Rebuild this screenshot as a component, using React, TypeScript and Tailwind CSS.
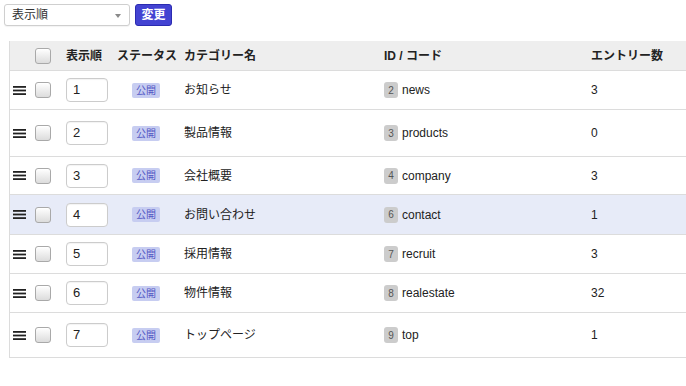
const rows = [
  { order: 1, name: 'お知らせ', id: 2, code: 'news', count: 3, h: 'h-[39px]', active: false },
  { order: 2, name: '製品情報', id: 3, code: 'products', count: 0, h: 'h-[47px]', active: false },
  { order: 3, name: '会社概要', id: 4, code: 'company', count: 3, h: 'h-[38px]', active: false },
  { order: 4, name: 'お問い合わせ', id: 6, code: 'contact', count: 1, h: 'h-[40px]', active: true },
  { order: 5, name: '採用情報', id: 7, code: 'recruit', count: 3, h: 'h-[39px]', active: false },
  { order: 6, name: '物件情報', id: 8, code: 'realestate', count: 32, h: 'h-[39px]', active: false },
  { order: 7, name: 'トップページ', id: 9, code: 'top', count: 1, h: 'h-[45px]', active: false },
]

function Checkbox() {
  return (
    <span className="block h-4 w-4 rounded-[3px] border border-[#a9a9a9] bg-gradient-to-b from-white to-[#dcdcdc] shadow-[inset_0_1px_0_#fff]" />
  )
}

function Handle() {
  return (
    <svg width="13" height="9" viewBox="0 0 13 9" className="block">
      <rect x="0" y="0" width="13" height="1.8" fill="#222" />
      <rect x="0" y="3.6" width="13" height="1.8" fill="#222" />
      <rect x="0" y="7.2" width="13" height="1.8" fill="#222" />
    </svg>
  )
}

export default function App() {
  return (
    <div className="h-[386px] w-[686px] overflow-hidden bg-white pl-1 pt-1 font-['Liberation_Sans','Noto_Sans_CJK_JP',sans-serif] text-[12px] text-[#222]">
      {/* Sort controls */}
      <div className="flex items-center gap-[5px]">
        <div className="relative flex h-[22px] w-[126px] items-center rounded-[3px] border border-[#cfcfcf] bg-white pl-[7px] text-[12px] text-[#333] shadow-[0_1px_1px_rgba(0,0,0,0.05)]">
          表示順
          <span className="absolute right-[8px] top-[9px] h-0 w-0 border-x-[3.5px] border-t-[4px] border-x-transparent border-t-[#8a8a8a]" />
        </div>
        <button className="flex h-[22px] w-[37px] items-center justify-center rounded-[3px] border border-[#2b2bb0] bg-[#4343d2] text-[12px] font-bold text-white">
          変更
        </button>
      </div>

      {/* Table */}
      <div className="ml-[5px] mt-[15px] border-l border-[#dcdcdc]">
        <div className="flex h-[30px] items-center border-b border-[#dcdcdc] bg-[#eeeeee] font-bold text-[#222]">
          <div className="w-[25px]" />
          <div className="w-[31px]">
            <Checkbox />
          </div>
          <div className="w-[51px]">表示順</div>
          <div className="w-[67px]">ステータス</div>
          <div className="w-[200px]">カテゴリー名</div>
          <div className="w-[207px]">ID / コード</div>
          <div className="flex-1">エントリー数</div>
        </div>
        {rows.map((r) => (
          <div
            key={r.order}
            className={`flex items-center border-b border-[#dcdcdc] ${r.h} ${r.active ? 'bg-[#e7ebf8]' : 'bg-white'}`}
          >
            <div className="w-[25px] pl-[3px]">
              <Handle />
            </div>
            <div className="w-[31px]">
              <Checkbox />
            </div>
            <div className="w-[51px]">
              <div className="flex h-[24px] w-[42px] items-center rounded-[4px] border border-[#cccccc] bg-white pl-[6px] text-[13px] shadow-[inset_0_1px_1px_rgba(0,0,0,0.05)]">
                {r.order}
              </div>
            </div>
            <div className="w-[67px] pl-[15px]">
              <span className="flex h-[15px] w-[28px] items-center justify-center rounded-[2px] bg-[#c7cdf1] text-[10px] text-[#5257c4]">
                公開
              </span>
            </div>
            <div className="w-[200px]">{r.name}</div>
            <div className="flex w-[207px] items-center gap-[4px]">
              <span className="flex h-[16px] w-[14px] items-center justify-center rounded-[3px] bg-[#cccccc] text-[10px] text-[#555]">
                {r.id}
              </span>
              <span>{r.code}</span>
            </div>
            <div className="flex-1">{r.count}</div>
          </div>
        ))}
      </div>
    </div>
  )
}
